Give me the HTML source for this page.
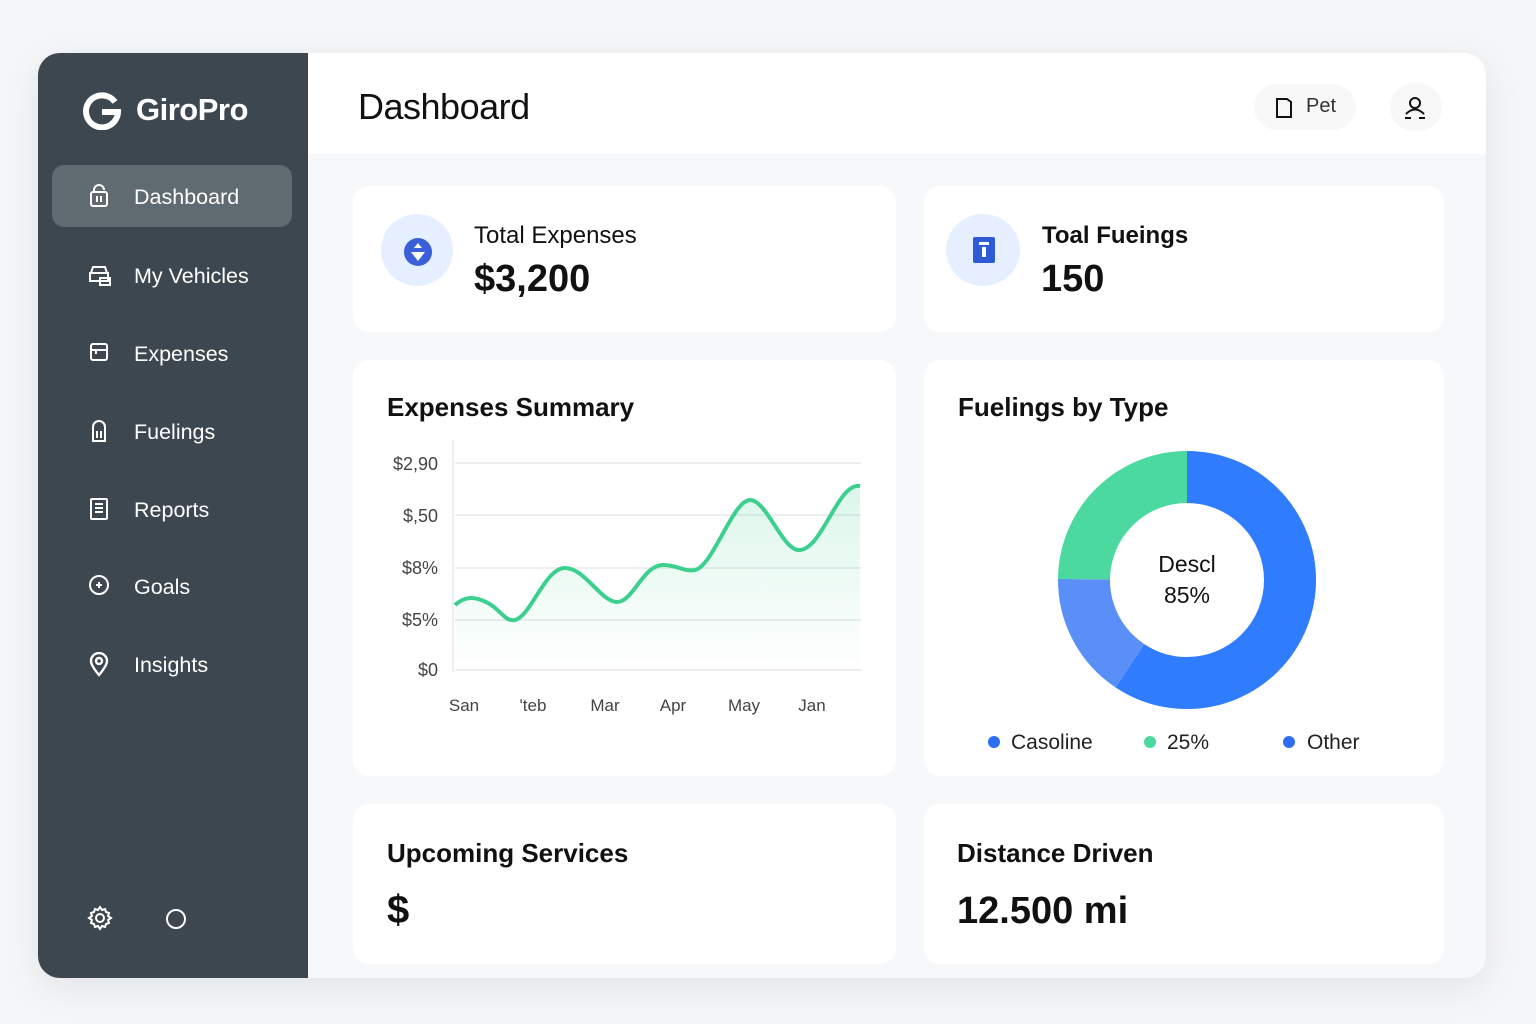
<!DOCTYPE html>
<html><head><meta charset="utf-8"><style>
*{box-sizing:border-box;margin:0;padding:0}
body{width:1536px;height:1024px;background:#f5f6f8;font-family:"Liberation Sans",sans-serif;position:relative;overflow:hidden;color:#111}
.frame{position:absolute;left:38px;top:53px;width:1448px;height:925px;border-radius:22px;background:#f7f8fa;overflow:hidden;box-shadow:0 10px 40px rgba(0,0,0,.08)}
.side{position:absolute;left:0;top:0;width:270px;height:925px;background:#3d474f}
.logo{position:absolute;left:44px;top:37px;color:#fff;font-size:31px;font-weight:bold;display:flex;align-items:center;gap:14px;letter-spacing:-0.5px}
.nav{position:absolute;left:14px;width:240px;height:62px;border-radius:12px;color:#fff;font-size:21.5px;display:flex;align-items:center;padding-left:82px;padding-top:2px}
.nav.act{background:#5f6a71}
.nav svg{position:absolute;left:36px;top:19px}
.top{position:absolute;left:270px;top:0;right:0;height:101px;background:#fff}
.top h1{position:absolute;left:50px;top:33px;font-size:36px;font-weight:normal;letter-spacing:-0.5px}
.card{position:absolute;background:#fff;border-radius:16px}
.ct{position:absolute;left:34px;top:32px;font-size:26px;font-weight:bold}
</style></head><body>
<div class="frame">
<div class="side">
 <div class="logo"><svg width="40" height="40" viewBox="0 0 40 40"><path d="M33 12A16 16 0 1 0 36 22H20" fill="none" stroke="#fff" stroke-width="6"/></svg>GiroPro</div>
 <div class="nav act" style="top:112px"><svg width="22" height="24" viewBox="0 0 22 24" fill="none" stroke="#fff" stroke-width="2"><rect x="3" y="8" width="16" height="14" rx="2"/><path d="M6 8V6a5 5 0 0 1 10 0"/><path d="M9 12v6M13 12v6"/></svg>Dashboard</div>
 <div class="nav" style="top:191px"><svg width="24" height="24" viewBox="0 0 24 24" fill="none" stroke="#fff" stroke-width="2"><path d="M5 4h12l2 6H3z"/><rect x="2" y="10" width="18" height="8"/><rect x="12" y="15" width="10" height="7"/></svg>My Vehicles</div>
 <div class="nav" style="top:269px"><svg width="22" height="22" viewBox="0 0 22 22" fill="none" stroke="#fff" stroke-width="2"><rect x="3" y="3" width="16" height="16" rx="2"/><path d="M3 9h16M8 9v4"/></svg>Expenses</div>
 <div class="nav" style="top:347px"><svg width="22" height="24" viewBox="0 0 22 24" fill="none" stroke="#fff" stroke-width="2"><path d="M5 22V8a6 6 0 0 1 12 0v14z"/><path d="M9 12v7M13 12v7"/></svg>Fuelings</div>
 <div class="nav" style="top:425px"><svg width="22" height="24" viewBox="0 0 22 24" fill="none" stroke="#fff" stroke-width="2"><rect x="3" y="2" width="16" height="20" rx="1"/><path d="M7 7h8M7 11h8M7 15h8"/></svg>Reports</div>
 <div class="nav" style="top:502px"><svg width="22" height="22" viewBox="0 0 22 22" fill="none" stroke="#fff" stroke-width="2"><circle cx="11" cy="11" r="9"/><path d="M8 11h6M11 8v6"/></svg>Goals</div>
 <div class="nav" style="top:580px"><svg width="22" height="26" viewBox="0 0 22 26" fill="none" stroke="#fff" stroke-width="2.4"><path d="M11 23S3 14 3 9a8 8 0 0 1 16 0c0 5-8 14-8 14z"/><circle cx="11" cy="9" r="3"/></svg>Insights</div>
 <svg style="position:absolute;left:49px;top:852px" width="26" height="26" viewBox="0 0 26 26" fill="none" stroke="#fff" stroke-width="2"><circle cx="13" cy="13" r="4"/><path d="M13 2l2 3 3-1 1 3 3 1-1 3 3 2-3 2 1 3-3 1-1 3-3-1-2 3-2-3-3 1-1-3-3-1 1-3-3-2 3-2-1-3 3-1 1-3 3 1z"/></svg>
 <svg style="position:absolute;left:127px;top:855px" width="22" height="22"><circle cx="11" cy="11" r="9" fill="none" stroke="#fff" stroke-width="2"/></svg>
</div>
<div class="top"><h1>Dashboard</h1>
 <div style="position:absolute;left:946px;top:31px;width:102px;height:46px;border-radius:23px;background:#f8f8f8;font-size:20px;color:#333;padding:11px 0 0 52px">Pet</div>
 <svg style="position:absolute;left:967px;top:44px" width="18" height="22" viewBox="0 0 18 22" fill="none" stroke="#111" stroke-width="2"><path d="M2 2h10l4 3v15H2z"/></svg>
 <div style="position:absolute;left:1082px;top:30px;width:52px;height:48px;border-radius:24px;background:#f8f8f8"></div>
 <svg style="position:absolute;left:1094px;top:42px" width="26" height="26" viewBox="0 0 26 26" fill="none" stroke="#111" stroke-width="2"><circle cx="13" cy="8" r="5"/><path d="M4 19q9-9 18 0M3 23h6M17 23h6"/></svg>
</div>
<div class="card" style="left:315px;top:133px;width:543px;height:146px">
 <div style="position:absolute;left:28px;top:28px;width:72px;height:72px;border-radius:50%;background:#e5efff"></div>
 <svg style="position:absolute;left:51px;top:52px" width="28" height="28" viewBox="0 0 28 28"><circle cx="14" cy="14" r="14" fill="#3a5fd8"/><path d="M14 5l4 5h-8zM7 14h14l-7 9z" fill="#fff"/></svg>
 <div style="position:absolute;left:121px;top:36px;font-size:24px">Total Expenses</div>
 <div style="position:absolute;left:121px;top:72px;font-size:38px;font-weight:bold">$3,200</div>
</div>
<div class="card" style="left:886px;top:133px;width:520px;height:146px">
 <div style="position:absolute;left:22px;top:28px;width:74px;height:72px;border-radius:50%;background:#e5efff"></div>
 <svg style="position:absolute;left:49px;top:51px" width="22" height="26"><rect width="22" height="26" rx="2" fill="#2f5ad6"/><rect x="6" y="5" width="10" height="3" fill="#fff"/><rect x="9" y="10" width="4" height="10" fill="#fff"/></svg>
 <div style="position:absolute;left:118px;top:36px;font-size:24px;font-weight:bold">Toal Fueings</div>
 <div style="position:absolute;left:117px;top:72px;font-size:38px;font-weight:bold">150</div>
</div>
<div class="card" style="left:315px;top:307px;width:543px;height:416px">
 <div class="ct">Expenses Summary</div>
</div>
<svg style="position:absolute;left:315px;top:307px" width="543" height="416" font-family="Liberation Sans" font-size="18" fill="#444">
 <defs><linearGradient id="g" x1="0" y1="0" x2="0" y2="1"><stop offset="0" stop-color="#3ccf8e" stop-opacity=".18"/><stop offset="1" stop-color="#3ccf8e" stop-opacity="0"/></linearGradient></defs>
 <g stroke="#e6e8ec" stroke-width="1.5"><line x1="102" y1="103" x2="508" y2="103"/><line x1="102" y1="155" x2="508" y2="155"/><line x1="102" y1="208" x2="508" y2="208"/><line x1="102" y1="260" x2="508" y2="260"/><line x1="102" y1="310" x2="508" y2="310"/><line x1="100" y1="80" x2="100" y2="312"/></g>
 <g text-anchor="end"><text x="85" y="110">$2,90</text><text x="85" y="162">$,50</text><text x="85" y="214">$8%</text><text x="85" y="266">$5%</text><text x="85" y="316">$0</text></g>
 <g text-anchor="middle" font-size="17"><text x="111" y="351">San</text><text x="180" y="351">'teb</text><text x="252" y="351">Mar</text><text x="320" y="351">Apr</text><text x="391" y="351">May</text><text x="459" y="351">Jan</text></g>
 <path d="M102 245C112 236 122 236 135 243C148 250 152 262 162 260C178 256 192 208 212 208C232 208 248 242 264 242C280 242 290 205 310 205C325 205 330 212 342 210C360 206 380 140 397 140C414 140 430 192 447 190C470 188 485 122 507 126V310H102Z" fill="url(#g)"/>
 <path d="M102 245C112 236 122 236 135 243C148 250 152 262 162 260C178 256 192 208 212 208C232 208 248 242 264 242C280 242 290 205 310 205C325 205 330 212 342 210C360 206 380 140 397 140C414 140 430 192 447 190C470 188 485 122 507 126" fill="none" stroke="#3ccf8e" stroke-width="4"/>
</svg>
<div class="card" style="left:886px;top:307px;width:520px;height:416px">
 <div class="ct">Fuelings by Type</div>
 <svg style="position:absolute;left:0;top:0" width="520" height="416" font-family="Liberation Sans">
  <g transform="translate(263,220) rotate(-90)" fill="none" stroke-width="52">
   <circle r="103" stroke="#2f7cff" stroke-dasharray="384 1000"/>
   <circle r="103" stroke="#5a8ff8" stroke-dasharray="0 384 102 1000"/>
   <circle r="103" stroke="#4cd9a0" stroke-dasharray="0 486 162 1000"/>
  </g>
  <text x="263" y="212" text-anchor="middle" font-size="23" fill="#111">Descl</text>
  <text x="263" y="243" text-anchor="middle" font-size="23" fill="#111">85%</text>
  <g font-size="21" fill="#222"><circle cx="70" cy="382" r="6" fill="#2f6ef0"/><text x="87" y="389">Casoline</text>
  <circle cx="226" cy="382" r="6" fill="#4cd9a0"/><text x="243" y="389">25%</text>
  <circle cx="365" cy="382" r="6" fill="#2f6ef0"/><text x="383" y="389">Other</text></g>
 </svg>
</div>
<div class="card" style="left:315px;top:751px;width:543px;height:160px">
 <div class="ct" style="top:34px">Upcoming Services</div>
 <div style="position:absolute;left:34px;top:84px;font-size:40px;font-weight:bold">$</div>
</div>
<div class="card" style="left:886px;top:751px;width:520px;height:160px">
 <div class="ct" style="left:33px;top:34px">Distance Driven</div>
 <div style="position:absolute;left:33px;top:86px;font-size:38px;font-weight:bold">12.500 mi</div>
</div>
</div>
</body></html>
